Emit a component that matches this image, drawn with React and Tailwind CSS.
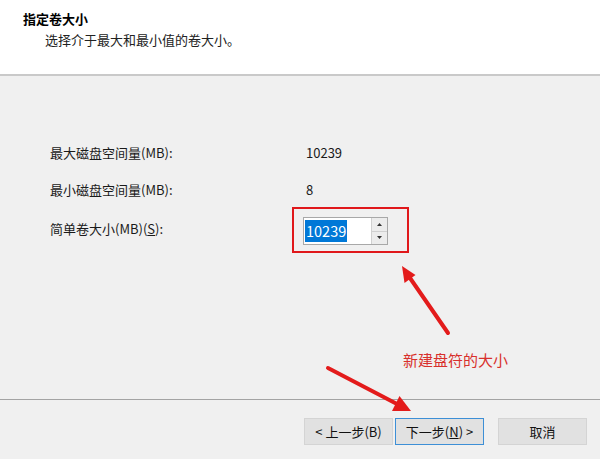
import React from 'react';

const font = { fontFamily: '"Noto Sans CJK SC", "Noto Sans", sans-serif' };

const Annotations = () => (
  <svg className="absolute inset-0 pointer-events-none" width="600" height="459" viewBox="0 0 600 459">
    <line x1="448" y1="333" x2="410" y2="278" stroke="#e31b1b" strokeWidth="4" strokeLinecap="round" />
    <polygon points="402,266 415.5,275 404.5,283" fill="#e31b1b" />
    <line x1="328" y1="368" x2="397" y2="404" stroke="#e31b1b" strokeWidth="4" strokeLinecap="round" />
    <polygon points="411,411 392,411 399.5,396" fill="#e31b1b" />
  </svg>
);

const Spinner = () => (
  <div className="flex flex-col w-[16px] border-l border-[#d0d0d0]">
    <div className="flex-1 flex items-center justify-center bg-[#ececec] border-b border-[#d0d0d0]">
      <svg width="5" height="3" viewBox="0 0 5 3"><polygon points="2.5,0 5,3 0,3" fill="#333" /></svg>
    </div>
    <div className="flex-1 flex items-center justify-center bg-[#ececec]">
      <svg width="5" height="3" viewBox="0 0 5 3"><polygon points="0,0 5,0 2.5,3" fill="#333" /></svg>
    </div>
  </div>
);

const Button = ({ children, primary }) => (
  <div
    className={`w-[89px] h-[27px] flex items-center justify-center text-[13px] text-[#111] bg-[#e1e1e1] border ${
      primary ? 'border-[#3d8fd6]' : 'border-[#d4d4d4]'
    }`}
  >
    {children}
  </div>
);

export default function App() {
  return (
    <div className="relative w-[600px] h-[459px] overflow-hidden flex flex-col bg-[#f0f0f0]" style={font}>
      {/* Header */}
      <div className="h-[76px] bg-white border-b-2 border-[#c9c9c9] pt-[10px] pl-[23px] shrink-0">
        <div className="text-[13px] leading-[18px] font-bold text-black">指定卷大小</div>
        <div className="mt-[3px] pl-[22px] text-[13px] leading-[18px] text-[#222]">选择介于最大和最小值的卷大小。</div>
      </div>

      {/* Body */}
      <div className="flex-1 pt-[67px] pl-[50px] text-[13px] text-[#1a1a1a]">
        <div className="flex leading-[20px]">
          <div className="w-[256px]">最大磁盘空间量(MB):</div>
          <div>10239</div>
        </div>
        <div className="flex leading-[20px] mt-[17px]">
          <div className="w-[256px]">最小磁盘空间量(MB):</div>
          <div>8</div>
        </div>
        <div className="flex items-center mt-[7px]">
          <div className="w-[242px] leading-[20px] -mt-[3px]">
            简单卷大小(MB)(<span className="underline">S</span>):
          </div>
          <div className="border-2 border-[#e0181b] pl-[9px] pr-[19px] pt-[8px] pb-[6px]">
            <div className="flex w-[85px] h-[28px] bg-white border border-[#a8a8a8]">
              <div className="flex-1 flex items-center pl-[1px]">
                <span className="bg-[#0078d7] text-white text-[14.5px] leading-[22px] px-[1px]">10239</span>
              </div>
              <Spinner />
            </div>
          </div>
        </div>
      </div>

      {/* Footer */}
      <div className="h-[60px] shrink-0 border-t border-[#a3a3a3] pt-[18px] pr-[13px] flex justify-end items-start">
        <div className="flex gap-[2px]">
          <Button>&lt; 上一步(B)</Button>
          <Button primary>
            下一步(<span className="underline">N</span>) &gt;
          </Button>
        </div>
        <div className="ml-[14px]">
          <Button>取消</Button>
        </div>
      </div>

      <div className="absolute left-[403px] top-[349px] text-[15px] leading-[22px] text-[#d8302c]">新建盘符的大小</div>
      <Annotations />
    </div>
  );
}
